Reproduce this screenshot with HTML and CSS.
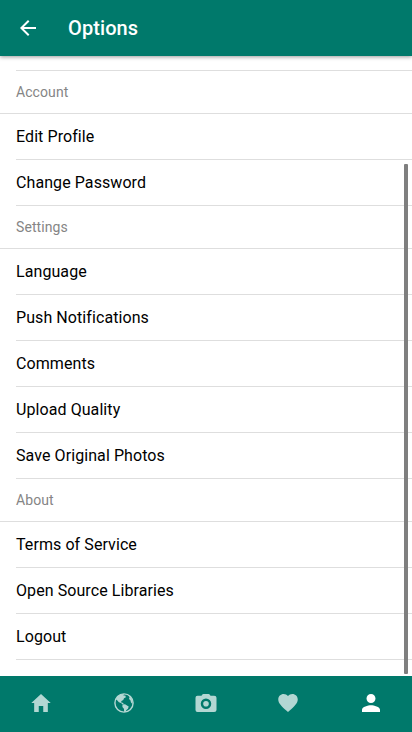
FILE: index.html
```html
<!DOCTYPE html>
<html lang="en">
<head>
<meta charset="utf-8">
<title>Options</title>
<link rel="stylesheet" href="styles.css">
</head>
<body>
<div class="app">
  <header class="toolbar">
    <svg class="icon" viewBox="0 0 24 24"><path d="M20 11H7.83l5.59-5.59L12 4l-8 8 8 8 1.41-1.41L7.83 13H20v-2z"/></svg>
    <h1 class="title">Options</h1>
  </header>
  <main class="content">
    <div class="previous"></div>
    <h2 class="section">Account</h2>
    <div class="item">Edit Profile</div>
    <div class="item">Change Password</div>
    <h2 class="section">Settings</h2>
    <div class="item">Language</div>
    <div class="item">Push Notifications</div>
    <div class="item">Comments</div>
    <div class="item">Upload Quality</div>
    <div class="item">Save Original Photos</div>
    <h2 class="section">About</h2>
    <div class="item">Terms of Service</div>
    <div class="item">Open Source Libraries</div>
    <div class="item">Logout</div>
    <div class="scrollbar"></div>
  </main>
  <nav class="tabs">
    <a class="tab"><svg class="icon" viewBox="0 0 512 512"><path d="M208 448V320h96v128h97.6V256H464L256 64 48 256h62.4v192z"/></svg></a>
    <a class="tab"><svg class="icon" viewBox="0 0 24 24"><circle class="ring" cx="12" cy="12" r="9.1"/><path d="M4 8.500 5.300 5.500 8.500 3.300 12 3l-.6 1.500 1.900.1.600 1.600-1.900 1.100-.7 1.600-1.900 1-.2 1.500 1.500.3 1.200 1.400-1 .3-2-1.400-2-.7-1.500-1.900z"/><path d="M10.500 13.500l2.500-.3 3.700 2.200-.7 2.400-1.600 1.300-.8 1.800-1.400.1-.3-3.200-1.500-1.900z"/><path d="M16.500 4.300l2.500 1.900 1.600 3.800-.2 3-1.400-1.500-.6-2.200-1.400-1.300.5-1.700z"/></svg></a>
    <a class="tab"><svg class="icon" viewBox="0 0 512 512"><path fill-rule="evenodd" d="M430.400 101.300H352l-18-26q-8-11.300-22-11.300H200q-14 0-22 11.300l-18 26H73.600Q32 101.300 32 142v264q0 42 41.600 42h356.800q49.600 0 49.600-42V142q0-40.700-49.600-40.700zM256 384a112 112 0 1 1 0-224 112 112 0 0 1 0 224zM256 212a60 60 0 1 0 0 120 60 60 0 0 0 0-120z"/></svg></a>
    <a class="tab"><svg class="icon" viewBox="0 0 512 512"><path d="M256 448l-30.200-27.200C118.400 322.400 48 258.800 48 179.100 48 114.200 98.500 64 163.200 64 199.700 64 234.900 81.100 256 108.100 277.100 81.100 312.300 64 348.800 64 413.500 64 464 114.200 464 179.100c0 79.700-70.400 143.300-177.800 241.700L256 448z"/></svg></a>
    <a class="tab active"><svg class="icon" viewBox="0 0 512 512"><path d="M256 256c52.800 0 96-43.200 96-96s-43.200-96-96-96-96 43.200-96 96 43.200 96 96 96zm0 48c-63.800 0-192 32.500-192 96v48h384v-48c0-63.500-128.200-96-192-96z"/></svg></a>
  </nav>
</div>
</body>
</html>
```
FILE: styles.css
```css
* { box-sizing: border-box; }
body { margin: 0; font-family: Roboto, "Liberation Sans", sans-serif; }
.app { height: 732px; display: flex; flex-direction: column; background: #fff; overflow: hidden; }
.icon { display: block; width: 24px; height: 24px; fill: currentColor; }
.toolbar { height: 56px; flex: none; display: flex; align-items: center; gap: 28px; padding: 0 16px; background: #00796b; color: #fff; box-shadow: 0 1px 4px rgba(0,0,0,.4); z-index: 1; }
.title { margin: 0; font-size: 20px; font-weight: 500; line-height: 24px; letter-spacing: .1px; }
.content { flex: 1; min-height: 0; position: relative; }
.previous { height: 15px; margin-left: 16px; border-bottom: 1px solid #dedede; }
.section { margin: 0; height: 43px; padding-left: 16px; border-bottom: 1px solid #dedede; font-size: 14px; font-weight: 400; line-height: 42px; letter-spacing: .08px; color: #858585; }
.item { height: 46px; margin-left: 16px; border-bottom: 1px solid #dedede; font-size: 16px; line-height: 45px; letter-spacing: .08px; color: #000; }
.scrollbar { position: absolute; right: 4px; top: 108px; width: 4px; height: 510px; border-radius: 1px; background: #7f7f7f; }
.tabs { height: 56px; flex: none; display: flex; padding-bottom: 2px; background: #00796b; color: #fff; }
.tab { flex: 1; display: flex; align-items: center; justify-content: center; opacity: .7; }
.tab.active { opacity: 1; }
.ring { fill: none; stroke: currentColor; stroke-width: 1.4; }
```
